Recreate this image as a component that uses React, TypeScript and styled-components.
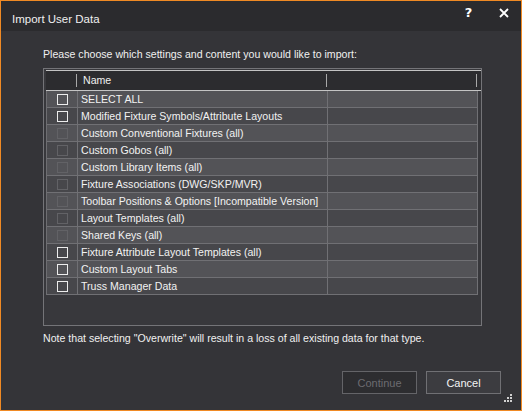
import styled, { createGlobalStyle } from "styled-components";

const GlobalStyle = createGlobalStyle`
  html, body {
    margin: 0;
    padding: 0;
    background: #ffffff;
  }
  body {
    font-family: "Liberation Sans", Arial, sans-serif;
  }
`;

type Item = { label: string; enabled: boolean };

const items: Item[] = [
  { label: "SELECT ALL", enabled: true },
  { label: "Modified Fixture Symbols/Attribute Layouts", enabled: true },
  { label: "Custom Conventional Fixtures (all)", enabled: false },
  { label: "Custom Gobos (all)", enabled: false },
  { label: "Custom Library Items (all)", enabled: false },
  { label: "Fixture Associations (DWG/SKP/MVR)", enabled: false },
  { label: "Toolbar Positions & Options [Incompatible Version]", enabled: false },
  { label: "Layout Templates (all)", enabled: false },
  { label: "Shared Keys (all)", enabled: false },
  { label: "Fixture Attribute Layout Templates (all)", enabled: true },
  { label: "Custom Layout Tabs", enabled: true },
  { label: "Truss Manager Data", enabled: true },
];

function App() {
  return (
    <>
      <GlobalStyle />
      <Window>
        <TitleBar>
          <Title>Import User Data</Title>
          <TitleButtons>
            <TitleButton>?</TitleButton>
            <TitleButton>
              <svg width="10" height="10" viewBox="0 0 10 10">
                <path d="M1 1 L9 9 M9 1 L1 9" stroke="#ffffff" strokeWidth="1.8" />
              </svg>
            </TitleButton>
          </TitleButtons>
        </TitleBar>
        <Body>
          <Prompt>Please choose which settings and content you would like to import:</Prompt>
          <ListBox>
            <HeaderRow>
              <HeaderCell $width={31} />
              <HeaderCell $width={250}>Name</HeaderCell>
              <HeaderCell $width={150} />
              <HeaderFill />
            </HeaderRow>
            <Rows>
              {items.map((item, i) => (
                <Row key={item.label} $alt={i % 2 === 1}>
                  <CheckCell>
                    <CheckBox $enabled={item.enabled} />
                  </CheckCell>
                  <NameCell>{item.label}</NameCell>
                  <ExtraCell />
                </Row>
              ))}
            </Rows>
          </ListBox>
          <Note>Note that selecting "Overwrite" will result in a loss of all existing data for that type.</Note>
          <Footer>
            <Button disabled>Continue</Button>
            <Button>Cancel</Button>
          </Footer>
        </Body>
        <Grip width="9" height="9" viewBox="0 0 9 9">
          <rect x="7" y="1" width="2" height="2" fill="#d0d0d0" />
          <rect x="4" y="4" width="2" height="2" fill="#d0d0d0" />
          <rect x="7" y="4" width="2" height="2" fill="#d0d0d0" />
          <rect x="1" y="7" width="2" height="2" fill="#d0d0d0" />
          <rect x="4" y="7" width="2" height="2" fill="#d0d0d0" />
          <rect x="7" y="7" width="2" height="2" fill="#d0d0d0" />
        </Grip>
      </Window>
    </>
  );
}

export default App;

const Window = styled.div`
  position: relative;
  box-sizing: border-box;
  width: 522px;
  height: 411px;
  border: 1px solid #f08a24;
  background: #343438;
  display: flex;
  flex-direction: column;
  color: #f0f0f0;
`;

const TitleBar = styled.div`
  height: 30px;
  background: #2b2b2e;
  display: flex;
  justify-content: space-between;
  align-items: flex-start;
`;

const Title = styled.div`
  padding: 11px 0 0 11px;
  font-size: 11.5px;
  line-height: 15px;
  color: #f0f0f0;
`;

const TitleButtons = styled.div`
  display: flex;
`;

const TitleButton = styled.div`
  width: 35px;
  height: 23px;
  display: flex;
  align-items: center;
  justify-content: center;
  font-family: "DejaVu Sans", sans-serif;
  font-weight: bold;
  font-size: 13px;
  color: #ffffff;
`;

const Body = styled.div`
  flex: 1;
  display: flex;
  flex-direction: column;
  padding: 16px 20px 16px 42px;
`;

const Prompt = styled.div`
  font-size: 10.6px;
  line-height: 14px;
  color: #f0f0f0;
  margin-bottom: 7px;
`;

const ListBox = styled.div`
  box-sizing: border-box;
  width: 439px;
  height: 258px;
  border: 1px solid #747478;
  padding: 1px 0 0 2px;
  background: #38383c;
`;

const HeaderRow = styled.div`
  display: flex;
  height: 19px;
  background: #2c2c2f;
  border-top: 1px solid #c4c4c4;
  border-bottom: 1px solid #c4c4c4;
`;

const HeaderCell = styled.div<{ $width: number }>`
  box-sizing: border-box;
  width: ${(p) => p.$width}px;
  position: relative;
  padding-left: 6px;
  font-size: 10.6px;
  line-height: 19px;
  color: #f0f0f0;

  &::after {
    content: "";
    position: absolute;
    right: 0;
    top: 3px;
    height: 13px;
    width: 1px;
    background: #a8a8a8;
  }
`;

const HeaderFill = styled.div`
  flex: 1;
`;

const Rows = styled.div`
  width: 431px;
  border-left: 1px solid #6e6e72;
`;

const Row = styled.div<{ $alt: boolean }>`
  display: flex;
  height: 16px;
  border-bottom: 1px solid #707074;
  background: ${(p) => (p.$alt ? "#47474b" : "#535357")};
`;

const CheckCell = styled.div`
  width: 30px;
  border-right: 1px solid #707074;
  display: flex;
  align-items: center;
  justify-content: center;
`;

const CheckBox = styled.div<{ $enabled: boolean }>`
  box-sizing: border-box;
  width: 11px;
  height: 11px;
  border: 1px solid ${(p) => (p.$enabled ? "#ececec" : "#626266")};
`;

const NameCell = styled.div`
  width: 246px;
  padding-left: 3px;
  border-right: 1px solid #707074;
  font-size: 10.6px;
  line-height: 16px;
  color: #f2f2f2;
  white-space: nowrap;
  overflow: hidden;
`;

const ExtraCell = styled.div`
  flex: 1;
  border-right: 1px solid #707074;
`;

const Note = styled.div`
  margin-top: 5px;
  font-size: 10.6px;
  line-height: 14px;
  color: #f0f0f0;
`;

const Footer = styled.div`
  margin-top: auto;
  display: flex;
  justify-content: flex-end;
  gap: 9px;
`;

const Button = styled.button`
  box-sizing: border-box;
  width: 75px;
  height: 23px;
  font-family: "Liberation Sans", Arial, sans-serif;
  font-size: 11px;
  border: 1px solid #707074;
  background: #3c3c40;
  color: #f4f4f4;
  padding: 0;

  &:disabled {
    background: #2d2d30;
    border-color: #646468;
    color: #6c6c70;
  }
`;

const Grip = styled.svg`
  position: absolute;
  right: 9px;
  bottom: 8px;
`;
